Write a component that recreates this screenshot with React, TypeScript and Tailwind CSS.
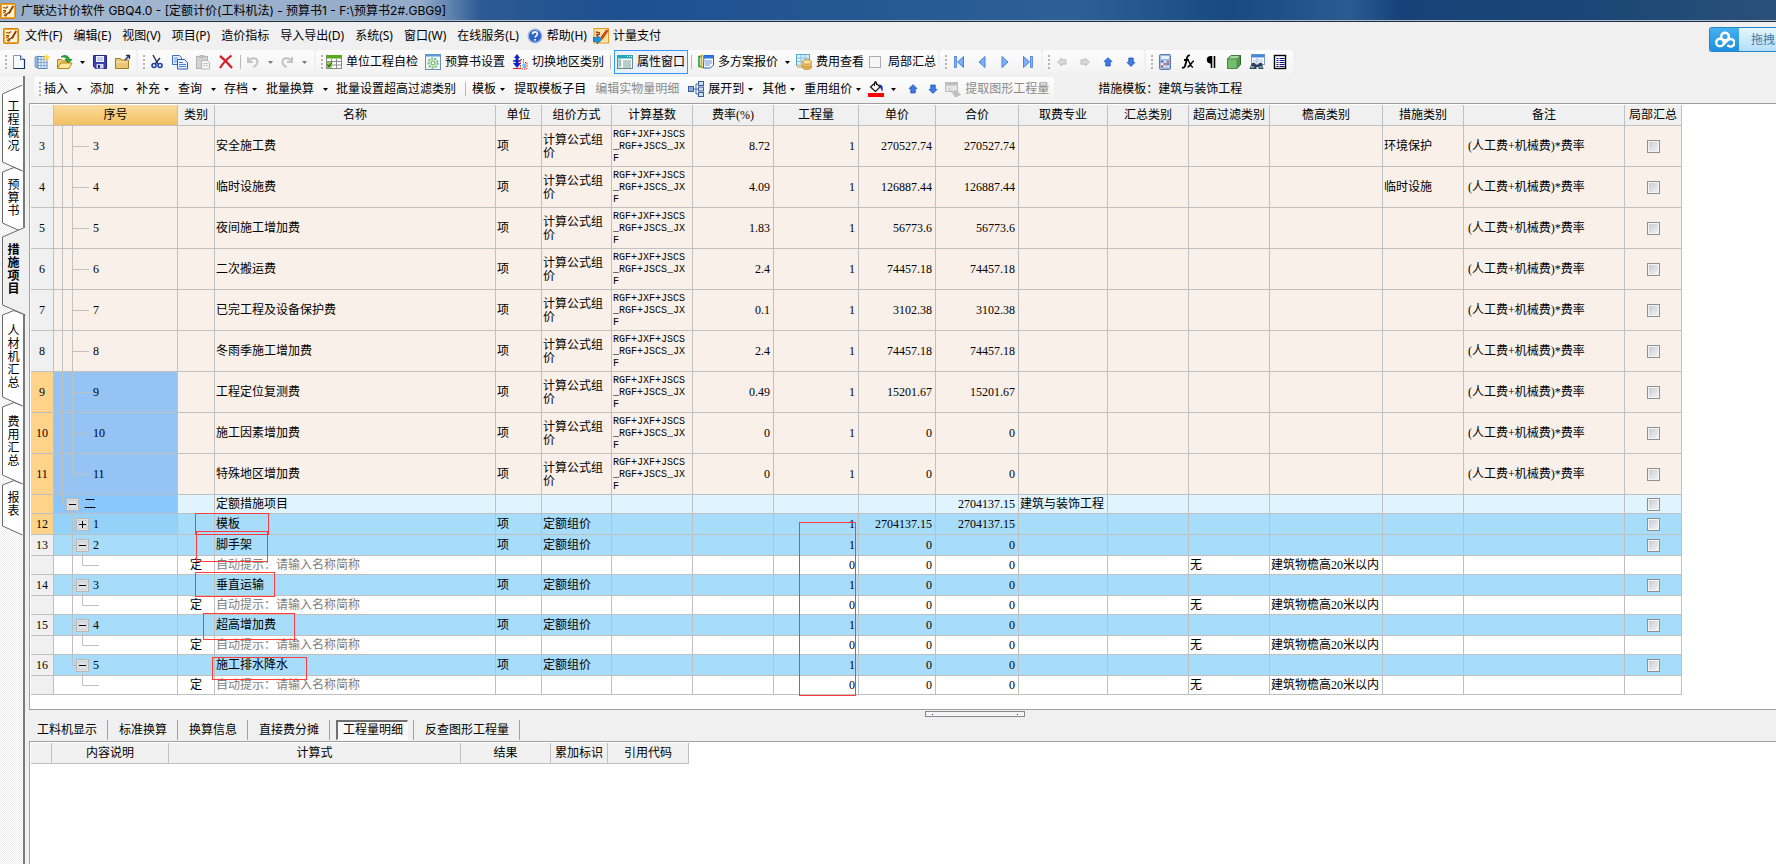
import React from 'react';
import clsx from 'clsx';

const UI_FONT = 'font-["Noto_Sans","Noto_Sans_CJK_SC",sans-serif]';
const TITLE_FONT = 'font-["Inter","Noto_Sans_CJK_SC",sans-serif]';
const GRID_FONT = 'font-["Liberation_Serif","Noto_Sans_CJK_SC",serif]';

/* ---------- icons ---------- */

const Svg = ({ children, size = 16 }: { children: React.ReactNode; size?: number }) => (
  <svg width={size} height={size} viewBox="0 0 16 16" fill="none" className="shrink-0" aria-hidden="true">
    {children}
  </svg>
);

const LogoIcon = () => (
  <Svg>
    <rect x="0.5" y="0.5" width="15" height="15" rx="1" fill="#f5a623" stroke="#d98213" />
    <rect x="2" y="2" width="12" height="12" fill="#fff3d6" />
    <path d="M3 4.500l3 .5 2-1.500M3 7.500h3M3 10l3-2M4 13l2-3" stroke="#a34a00" strokeWidth="1.200" />
    <path d="M5.500 13.500c1-3 3-4 5-4.500" stroke="#7a2e00" strokeWidth="1.200" />
    <path d="M8 10l4.500-7.500 1.500 1L9.500 11z" fill="#8a3600" />
  </Svg>
);

const NewIcon = () => (
  <Svg>
    <path d="M2.500 1.500h7l4 4v9h-11z" fill="#f6faff" stroke="#7d97bd" />
    <path d="M9.500 1.500v4h4" fill="#c8daf0" stroke="#3d5f8f" />
    <path d="M13.500 5v9.500h-11" stroke="#16365f" strokeWidth="1.200" />
  </Svg>
);

const TableNewIcon = () => (
  <Svg>
    <path d="M1 3l3-1v12l-3-1z" fill="#9dbbe0" stroke="#5d86b8" strokeWidth="0.7" />
    <rect x="4" y="2.500" width="9" height="12" fill="#eaf2fc" stroke="#5d86b8" />
    <path d="M4 5.500h9M4 8.500h9M4 11.500h9M7 3v11M10 3v11" stroke="#7fa5d4" />
    <path d="M12.500 0l1 2 2-.5-1 2 1.500 1.500-2 .3-.5 2-1.500-1.600-2 .6.8-2L9 2.500l2.200-.2z" fill="#ffd84a" />
  </Svg>
);

const OpenIcon = () => (
  <Svg>
    <path d="M.5 14V5.500h4l1 1.500h6v2" fill="#f5cf6a" stroke="#b98518" />
    <path d="M.5 14.500L3.500 9H15l-3 5.500z" fill="#ffe9a0" stroke="#b98518" />
    <path d="M4 3c4-3 8-1 8.500 2.500H15L11.500 9 8 5.500h2C9.500 3.500 7 2.500 4 3z" fill="#2fae2f" stroke="#157015" strokeWidth="0.7" />
  </Svg>
);

const SaveIcon = () => (
  <Svg>
    <path d="M1.500 1.500h13v13h-11l-2-2z" fill="#3b41b5" stroke="#23287e" />
    <rect x="4" y="2" width="8" height="6" fill="#f3f5ff" />
    <path d="M5 4h6M5 6h6" stroke="#9aa0dd" />
    <rect x="4.500" y="10" width="7" height="4.500" fill="#d6d9f2" />
    <rect x="6" y="11" width="2" height="3" fill="#23287e" />
  </Svg>
);

const FolderIcon = () => (
  <Svg>
    <path d="M.5 4.500h5l1 1.500h7v8.500H.5z" fill="#e9c777" stroke="#a37c2a" />
    <path d="M1 8h12" stroke="#fbe7b4" />
    <path d="M10 6l4-4M11 1.500h3.500V5" stroke="#1e2f6b" strokeWidth="1.300" />
  </Svg>
);

const CutIcon = () => (
  <Svg>
    <path d="M4 1l5 9M11 4L6 10" stroke="#222d5a" strokeWidth="1.400" />
    <circle cx="5" cy="11.500" r="2" stroke="#1a3fb0" strokeWidth="1.600" />
    <circle cx="11" cy="11.500" r="2" stroke="#1a3fb0" strokeWidth="1.600" />
  </Svg>
);

const CopyIcon = () => (
  <Svg>
    <path d="M.5 1.500h7l2 2v7H.5z" fill="#e7f0ff" stroke="#3c6fc9" />
    <path d="M2 4h4M2 6h4M2 8h4" stroke="#6f98dd" />
    <path d="M5.500 5.500h7l3 3v6.500h-10z" fill="#e7f0ff" stroke="#2a5cba" />
    <path d="M7 8.500h4M7 10.500h7M7 12.500h7" stroke="#4d80d4" />
  </Svg>
);

const PasteIcon = () => (
  <Svg>
    <rect x="1.500" y="2.500" width="11" height="12" fill="#d3d3d3" stroke="#b2b2b2" />
    <rect x="4.500" y="1" width="5" height="3" fill="#bcbcbc" />
    <path d="M6.500 6.500h6l2 2v6.500h-8z" fill="#f4f4f4" stroke="#b8b8b8" />
    <path d="M8 9.500h5M8 11.500h5" stroke="#c8c8c8" />
  </Svg>
);

const DeleteIcon = () => (
  <Svg>
    <path d="M2 2c4 3 8 7 12 12M13.500 1.500C9 5 5 9 2 14" stroke="#d3202b" strokeWidth="2.200" />
  </Svg>
);

const UndoIcon = ({ flip = false }: { flip?: boolean }) => (
  <svg width="14" height="14" viewBox="0 0 14 14" fill="none" className={clsx('shrink-0', flip && '-scale-x-100')} aria-hidden="true">
    <path d="M2 2v5h5M2.500 6.500C5 2 11 2.500 11.500 6.500c.2 3-2 4.500-4 5.500" stroke="#c3c3c3" strokeWidth="2" />
  </svg>
);

const CheckGridIcon = () => (
  <Svg>
    <rect x="0.500" y="1.500" width="15" height="13" fill="#fff" stroke="#8a8a8a" />
    <rect x="0.500" y="1" width="15" height="3.500" fill="#5aa81c" />
    <path d="M0 7.500h16M0 11h16M5.500 5v10M10.500 5v10" stroke="#8a8a8a" />
    <rect x="1" y="8" width="5" height="6" fill="#8ed04b" />
    <path d="M1.500 10.500l1.500 2 3-4" stroke="#1d5a00" strokeWidth="1.200" />
  </Svg>
);

const GearIcon = () => (
  <Svg>
    <rect x="0.500" y="0.500" width="15" height="15" fill="#eef6fb" stroke="#6c8fb5" />
    <path d="M0 1.500h16" stroke="#5a9bd8" strokeWidth="2" />
    <circle cx="8" cy="9" r="4.600" fill="#d8f0d4" stroke="#6fb573" strokeWidth="1.800" strokeDasharray="2 1.200" />
    <circle cx="8" cy="9" r="2" fill="#fff" stroke="#56a25b" />
  </Svg>
);

const SwitchIcon = () => (
  <Svg>
    <path d="M5 0l3 4H6.500v5h2.500l-4 5-4-5h2.500V4H2z" fill="#1022c8" />
    <path d="M1 7h7" stroke="#1022c8" strokeWidth="1.500" />
    <path d="M8.500 5.500h3v3h3.500v6.500H8.500z" fill="#fff" stroke="#e02020" strokeDasharray="1.500 1" />
    <path d="M10.500 9.500h3.500V14h-3.500z" fill="#69c6de" />
    <path d="M1 14.500h7" stroke="#e02020" />
  </Svg>
);

const PropertyIcon = () => (
  <Svg>
    <rect x="0.500" y="1.500" width="15" height="13" fill="#fff" stroke="#6b8796" />
    <rect x="0.500" y="1" width="15" height="3.500" fill="#2aa5b8" />
    <path d="M10 2.500h1M12 2.500h1M14 2.500h1" stroke="#fff" />
    <rect x="1" y="5" width="3.500" height="9" fill="#c4dede" />
    <path d="M2 7h2M2 9h2M2 11h2M6 7h8M6 9h8M6 11h8M6 13h8" stroke="#6f9e8e" />
  </Svg>
);

const PlansIcon = () => (
  <Svg>
    <path d="M3 2.500H1v10h2" stroke="#1f9c3c" strokeWidth="1.600" />
    <path d="M5 1.500H3.500v12H5" stroke="#e0a400" strokeWidth="1.600" />
    <path d="M6 1.500h9.500v9.500l-3 3H5.500z" fill="#fff" stroke="#1c5fd0" />
    <rect x="5.500" y="1.500" width="10" height="3" fill="#2f74e0" />
    <path d="M7 7h7M7 9h7M7 11h5" stroke="#5b90e6" />
  </Svg>
);

const CoinsIcon = () => (
  <Svg>
    <rect x="0.500" y="0.500" width="13" height="11" fill="#dff1fb" stroke="#5aa7d4" />
    <path d="M1 4h12M1 7.500h12M5 1v10M9 1v10" stroke="#7cc0e4" />
    <ellipse cx="11" cy="13" rx="4.500" ry="2.300" fill="#e9b64e" stroke="#c2933c" />
    <ellipse cx="11" cy="10.500" rx="4.500" ry="2.300" fill="#f4cb6c" stroke="#c2933c" />
    <ellipse cx="11" cy="8" rx="4.500" ry="2.300" fill="#fbe09a" stroke="#c2933c" />
    <path d="M1 10.500h5v3.500H1z" fill="#d9c88a" />
  </Svg>
);

const HelpIcon = () => (
  <Svg>
    <circle cx="8" cy="8" r="6.800" fill="#2f63c8" stroke="#9db8e4" strokeWidth="1.400" />
    <path d="M5.600 6.200c.2-3 4.800-3 4.800-.2 0 1.800-2.300 1.800-2.300 3.600M8.100 11v1.700" stroke="#fff" strokeWidth="1.700" />
  </Svg>
);

const PayIcon = () => (
  <Svg>
    <rect x="1" y="0.500" width="14.500" height="14.500" fill="#ffe2a4" stroke="#e39a26" />
    <path d="M3 4l4 1M3 7l4-1M8 10l6-8" stroke="#a83a1a" strokeWidth="1.600" />
    <path d="M9 11l6-9" stroke="#d3541f" strokeWidth="2" />
    <path d="M0 9.500h4V7l5 4.500L4 16v-2.500H0z" fill="#1f8fd6" stroke="#0d5d97" strokeWidth="0.600" />
  </Svg>
);

type Dir = 'left' | 'right' | 'up' | 'down';
const ROTATE: Record<Dir, number> = { up: 0, right: 90, down: 180, left: 270 };

const BlockArrow = ({ dir, disabled = false }: { dir: Dir; disabled?: boolean }) => (
  <Svg size={14}>
    <path
      d="M8 3l4.500 4.500H10.500v5h-5v-5H3.500z"
      transform={`rotate(${ROTATE[dir]} 8 8)`}
      fill={disabled ? '#d9d9d9' : '#3f7be8'}
      stroke={disabled ? '#b9b9b9' : '#2456b8'}
    />
  </Svg>
);

const NavIcon = ({ dir, bar = false }: { dir: 'left' | 'right'; bar?: boolean }) => (
  <Svg>
    <g transform={dir === 'right' ? 'rotate(180 8 8)' : undefined}>
      <path d={bar ? 'M12.500 2.500v11L6.500 8z' : 'M11 2.500v11L5 8z'} fill="#7fb0f5" stroke="#4a80dc" />
      {bar && <rect x="3.500" y="2.500" width="2" height="11" fill="#7fb0f5" stroke="#4a80dc" strokeWidth="0.800" />}
    </g>
  </Svg>
);

const CalcIcon = () => (
  <Svg>
    <rect x="2.500" y="0.500" width="11" height="15" rx="1" fill="#9db6de" stroke="#5d79ad" />
    <rect x="4" y="2" width="8" height="3" fill="#e6f0fb" />
    <path d="M4 7.500h8M4 10h8M4 12.500h8" stroke="#fff" strokeWidth="1.600" strokeDasharray="2 1" />
    <path d="M10 7.500h2M7 10h2M4 12.500h2" stroke="#e04040" strokeWidth="1.600" />
    <path d="M4 7.500h2M10 10h2" stroke="#3355c0" strokeWidth="1.600" />
  </Svg>
);

const FxIcon = () => (
  <Svg>
    <path d="M10 1.500c-3-1-3 3-4 7s-1.500 6-4 5M4 6h5" stroke="#000" strokeWidth="1.800" />
    <path d="M8 7c2 0 2 6 5 6M14 7c-2 0-4 6-6.500 6" stroke="#000" strokeWidth="1.400" />
  </Svg>
);

const PilcrowIcon = () => (
  <Svg>
    <path d="M13.500 2H7a3.800 3.800 0 0 0 0 7.500h1V2z" fill="#000" />
    <path d="M8.500 2v12M11.500 2v12" stroke="#000" strokeWidth="1.600" />
  </Svg>
);

const CubeIcon = () => (
  <Svg>
    <path d="M1.500 5l3.500-3.500h9.500v9L11 14.500H1.500z" fill="#4d9a4a" stroke="#2a6428" />
    <path d="M1.500 5L5 1.500h9.500L11 5z" fill="#a6d8a2" stroke="#2a6428" strokeWidth="0.600" />
    <path d="M1.500 5H11v9.500H1.500z" fill="#74bd6f" stroke="#3f8a3c" strokeWidth="0.600" />
  </Svg>
);

const FindIcon = () => (
  <Svg>
    <rect x="2.500" y="0.500" width="13" height="10" fill="#fff" stroke="#7a9cd0" />
    <rect x="2.500" y="0.500" width="13" height="3" fill="#4a86dc" />
    <path d="M4 6h10M4 8h10M8 4v6" stroke="#a9bfdf" />
    <path d="M3 9h3l1 2h2l1-2h3l1.500 6H9.500v-2h-2v2H.5z" fill="#30404e" />
    <path d="M2 13h3M10.500 13h3" stroke="#8ec1e8" strokeWidth="1.400" />
  </Svg>
);

const ListIcon = () => (
  <Svg>
    <rect x="2.500" y="1.500" width="11" height="13" fill="#fff" stroke="#000" strokeWidth="1.400" />
    <path d="M4.500 4.500h2M4.500 6.500h2M4.500 8.500h2M4.500 10.500h2M4.500 12.500h2M7.500 4.500h5M7.500 6.500h5M7.500 8.500h5M7.500 10.500h5M7.500 12.500h5" stroke="#0a0a8c" />
  </Svg>
);

const ExpandIcon = () => (
  <Svg>
    <path d="M5 8h5M8 3v10M8 3h3M8 13h3" stroke="#4b6ea8" />
    <rect x="0.500" y="5.500" width="5" height="5" fill="#8aa9dc" stroke="#3a5c98" />
    <rect x="10.500" y="0.500" width="5" height="4" fill="#cfdcf2" stroke="#3a5c98" />
    <rect x="10.500" y="6" width="5" height="4" fill="#cfdcf2" stroke="#3a5c98" />
    <rect x="10.500" y="11.500" width="5" height="4" fill="#cfdcf2" stroke="#3a5c98" />
  </Svg>
);

const BucketIcon = () => (
  <Svg>
    <path d="M2.500 6l5-4.500L12 6l-4.500 4.500z" fill="#fff" stroke="#111" strokeWidth="1.200" />
    <path d="M6.500 5V1.500c0-1.500 2-1.500 2 0V4" stroke="#111" />
    <path d="M11 3.500c4 0 4 3 3.500 7-1.500-1-1.500-4-3.500-5z" fill="#1c2fa8" />
    <rect x="0" y="12" width="16" height="4" fill="#f00" />
  </Svg>
);

const ExtractIcon = () => (
  <Svg>
    <rect x="0.500" y="1.500" width="12" height="9" fill="#e4e4e4" stroke="#bdbdbd" />
    <rect x="0.500" y="1.500" width="12" height="3" fill="#bdbdbd" />
    <path d="M4 7c1 4 4 5 6 5V9.500l5.500 4-5.500 3" fill="#c2c2c2" stroke="#adadad" strokeWidth="0.600" />
  </Svg>
);

const CloudIcon = () => (
  <svg width="20" height="18" viewBox="0 0 20 18" fill="none" stroke="#fff" strokeWidth="2.400" aria-hidden="true">
    <circle cx="10" cy="5.500" r="3.800" />
    <circle cx="5" cy="11.500" r="3.800" />
    <path d="M8 14l5-5a3.800 3.800 0 1 1-.5 5" />
  </svg>
);

/* ---------- toolbar parts ---------- */

const Caret = ({ disabled = false }: { disabled?: boolean }) => (
  <svg width="5" height="3" viewBox="0 0 5 3" className="shrink-0" aria-hidden="true">
    <path d="M0 0h5L2.500 3z" fill={disabled ? '#777' : '#000'} />
  </svg>
);

const Grip = () => (
  <span className="flex w-[7px] shrink-0 flex-col items-center gap-0.5 pl-1">
    {[0, 1, 2, 3].map((n) => (
      <i key={n} className="size-0.5 bg-[#b4b4b4]" />
    ))}
  </span>
);

const Sep = () => (
  <span className="flex w-[7px] shrink-0 justify-center">
    <i className="h-3.5 w-px bg-[#b8b8b8]" />
  </span>
);

const Group = ({ children }: { children: React.ReactNode }) => (
  <div className="flex h-6 shrink-0 items-center rounded-[3px] bg-linear-to-b from-[#fdfdfd] to-[#f2f2f2] pr-0.5">
    <Grip />
    {children}
  </div>
);

const IconBtn = ({ label, className = 'w-[23px]', children }: { label: string; className?: string; children: React.ReactNode }) => (
  <button type="button" aria-label={label} className={clsx('flex h-6 shrink-0 items-center justify-center', className)}>
    {children}
  </button>
);

type TextBtnProps = { label: string; icon?: React.ReactNode; active?: boolean; disabled?: boolean; menu?: boolean; className?: string };

const TextBtn = ({ label, icon, active, disabled, menu, className }: TextBtnProps) => (
  <button
    type="button"
    disabled={disabled}
    className={clsx(
      'flex h-6 shrink-0 items-center gap-1 whitespace-nowrap',
      active && 'border border-[#3399ff] bg-[#eaf1f8] px-0.5',
      !active && 'pl-[3px]',
      !active && (menu ? 'pr-1.5' : 'pr-[3px]'),
      disabled && 'text-[#8a8a8a]',
      className,
    )}
  >
    {icon}
    {label}
    {menu && <Caret />}
  </button>
);

const Split = ({ label }: { label: string }) => (
  <>
    <TextBtn label={label} />
    <IconBtn label={`${label}选项`} className="w-4">
      <Caret />
    </IconBtn>
  </>
);

/* ---------- window chrome ---------- */

const TitleBar = () => (
  <header className="flex h-[22px] items-center gap-[5px] border-b border-[#1d2c40] bg-[linear-gradient(90deg,#8fa9c8_0,#a3b7d0_60px,#93abc9_420px,#2c5a93_480px,#1d5090_620px,#2c6095_1080px,#184a80_1230px,#2a5c90_1350px,#164278_1400px,#1a4776_1600px,#2a5078_100%)] shadow-[inset_0_-1px_0_#aebdcf]">
    <LogoIcon />
    <h1 className={clsx('text-[12px] leading-4', TITLE_FONT)}>广联达计价软件 GBQ4.0 - [定额计价(工料机法) - 预算书1 - F:\预算书2#.GBG9]</h1>
  </header>
);

const MENUS = ['文件(F)', '编辑(E)', '视图(V)', '项目(P)', '造价指标', '导入导出(D)', '系统(S)', '窗口(W)', '在线服务(L)'];

const MenuBar = () => (
  <nav className="flex h-7 items-center pl-[3px]">
    <LogoIcon />
    <div className="flex items-center gap-[11px] pl-1.5">
      {MENUS.map((m) => (
        <button key={m} type="button">{m}</button>
      ))}
    </div>
    <div className="flex items-center gap-1.5 pl-2">
      <button type="button" className="flex items-center gap-1"><HelpIcon />帮助(H)</button>
      <button type="button" className="flex items-center gap-1"><PayIcon />计量支付</button>
    </div>
  </nav>
);

const MainToolbar = () => (
  <div className="flex h-[26px] items-start gap-0.5">
    <Group>
      <IconBtn label="新建"><NewIcon /></IconBtn>
      <IconBtn label="新建表"><TableNewIcon /></IconBtn>
      <IconBtn label="打开"><OpenIcon /></IconBtn>
      <IconBtn label="最近文件" className="w-3"><Caret /></IconBtn>
      <IconBtn label="保存"><SaveIcon /></IconBtn>
      <IconBtn label="导出"><FolderIcon /></IconBtn>
    </Group>
    <Group>
      <IconBtn label="剪切"><CutIcon /></IconBtn>
      <IconBtn label="复制"><CopyIcon /></IconBtn>
      <IconBtn label="粘贴"><PasteIcon /></IconBtn>
      <IconBtn label="删除"><DeleteIcon /></IconBtn>
      <Sep />
      <IconBtn label="撤销" className="w-[18px]"><UndoIcon /></IconBtn>
      <IconBtn label="撤销列表" className="w-4"><Caret disabled /></IconBtn>
      <IconBtn label="重做" className="w-[18px]"><UndoIcon flip /></IconBtn>
      <IconBtn label="重做列表" className="w-4"><Caret disabled /></IconBtn>
    </Group>
    <Group>
      <div className="flex items-center gap-px">
        <TextBtn icon={<CheckGridIcon />} label="单位工程自检" />
        <TextBtn icon={<GearIcon />} label="预算书设置" />
        <TextBtn icon={<SwitchIcon />} label="切换地区类别" />
      </div>
      <Sep />
      <TextBtn icon={<PropertyIcon />} label="属性窗口" active />
      <Sep />
      <TextBtn icon={<PlansIcon />} label="多方案报价" />
      <IconBtn label="多方案报价选项" className="w-3"><Caret /></IconBtn>
      <TextBtn icon={<CoinsIcon />} label="费用查看" />
      <label className="flex items-center gap-[7px] pl-0.5">
        <input type="checkbox" className="size-3 appearance-none border border-[#adadad] bg-[#f6f6f6]" />
        局部汇总
      </label>
    </Group>
    <Group>
      <IconBtn label="首条"><NavIcon dir="left" bar /></IconBtn>
      <IconBtn label="上一条"><NavIcon dir="left" /></IconBtn>
      <IconBtn label="下一条"><NavIcon dir="right" /></IconBtn>
      <IconBtn label="末条"><NavIcon dir="right" bar /></IconBtn>
    </Group>
    <Group>
      <IconBtn label="左移"><BlockArrow dir="left" disabled /></IconBtn>
      <IconBtn label="右移"><BlockArrow dir="right" disabled /></IconBtn>
      <IconBtn label="上移"><BlockArrow dir="up" /></IconBtn>
      <IconBtn label="下移"><BlockArrow dir="down" /></IconBtn>
    </Group>
    <Group>
      <IconBtn label="计算器"><CalcIcon /></IconBtn>
      <IconBtn label="函数"><FxIcon /></IconBtn>
      <IconBtn label="段落"><PilcrowIcon /></IconBtn>
      <IconBtn label="图元"><CubeIcon /></IconBtn>
      <IconBtn label="查找"><FindIcon /></IconBtn>
      <IconBtn label="列表"><ListIcon /></IconBtn>
    </Group>
  </div>
);

const EditToolbar = () => (
  <div className="ml-[5px] flex items-center">
    <Group>
      <Split label="插入" />
      <Split label="添加" />
      <TextBtn label="补充" menu />
      <Split label="查询" />
      <TextBtn label="存档" menu />
      <Split label="批量换算" />
      <TextBtn label="批量设置超高过滤类别" className="mr-[3px]" />
      <Sep />
      <TextBtn label="模板" menu />
      <TextBtn label="提取模板子目" className="mr-[3px]" />
      <TextBtn label="编辑实物量明细" disabled className="mr-[3px]" />
      <TextBtn icon={<ExpandIcon />} label="展开到" menu />
      <TextBtn label="其他" menu />
      <TextBtn label="重用组价" menu />
      <IconBtn label="填充颜色" className="w-[18px]"><BucketIcon /></IconBtn>
      <IconBtn label="颜色选项" className="w-4"><Caret /></IconBtn>
      <IconBtn label="上移行"><BlockArrow dir="up" /></IconBtn>
      <IconBtn label="下移行" className="w-[18px]"><BlockArrow dir="down" /></IconBtn>
      <TextBtn icon={<ExtractIcon />} label="提取图形工程量" disabled />
    </Group>
    <p className="ml-11 whitespace-nowrap">措施模板：建筑与装饰工程</p>
  </div>
);

/* ---------- side tabs ---------- */

const SIDE_TABS = [
  { label: '工程概况', h: 82, end: 86, first: true },
  { label: '预算书', h: 61, end: 65 },
  { label: '措施项目', h: 82, end: 86, active: true },
  { label: '人材机汇总', h: 92, end: 96 },
  { label: '费用汇总', h: 78, end: 82 },
  { label: '报表', h: 48, end: 55 },
];

const SideTabs = () => (
  <aside className="w-[25px] shrink-0 border-r-2 border-[#7a7a7a] bg-[repeating-conic-gradient(#ffffff_0_25%,#eeeeee_0_50%)] bg-size-[2px_2px] pt-[9px]">
    {SIDE_TABS.map(({ label, h, end, first, active }) => {
      const top = first ? 'M22.500 0L2.500 9' : 'M22.500 4L14 0.500L2.500 5';
      return (
        <button
          key={label}
          type="button"
          style={{ height: h }}
          className={clsx('relative flex w-[23px] items-center justify-center', active && 'z-10')}
        >
          <svg width="26" height={end + 2} className="absolute top-0 left-0" fill="none" aria-hidden="true">
            <path
              d={active ? `M25.500 -1L2.500 9V${end - 9}L25.500 ${end + 1}` : `${top}V${end - 9}L22.500 ${end}`}
              fill={active ? '#f0f0f0' : '#fff'}
              stroke="#6a6a6a"
            />
          </svg>
          <span className={clsx('relative ml-1 w-3 text-[12px] leading-[13px] break-all', active && 'font-bold')}>{label}</span>
        </button>
      );
    })}
  </aside>
);

/* ---------- main grid ---------- */

const COLS: [string, string][] = [
  ['', 'w-[23px]'],
  ['序号', 'w-[124px]'],
  ['类别', 'w-[37px]'],
  ['名称', 'w-[281px]'],
  ['单位', 'w-[46px]'],
  ['组价方式', 'w-[70px]'],
  ['计算基数', 'w-[81px]'],
  ['费率(%)', 'w-[81px]'],
  ['工程量', 'w-[85px]'],
  ['单价', 'w-[77px]'],
  ['合价', 'w-[83px]'],
  ['取费专业', 'w-[89px]'],
  ['汇总类别', 'w-[81px]'],
  ['超高过滤类别', 'w-[81px]'],
  ['檐高类别', 'w-[113px]'],
  ['措施类别', 'w-[81px]'],
  ['备注', 'w-[161px]'],
  ['局部汇总', 'w-[57px]'],
];

type Kind = 'fee' | 'group' | 'item' | 'sub';

interface Row {
  kind: Kind;
  no?: string;
  seq?: string;
  name: string;
  rate?: string;
  qty?: string;
  price?: string;
  total?: string;
  measure?: string;
  selected?: boolean;
  closed?: boolean;
  last?: boolean;
}

const fee = (no: string, name: string, rate: string, price: string, extra: Partial<Row> = {}): Row => ({
  kind: 'fee', no, seq: no, name, rate, qty: '1', price, total: price, ...extra,
});
const item = (no: string, seq: string, name: string, extra: Partial<Row> = {}): Row => ({
  kind: 'item', no, seq, name, qty: '1', price: '0', total: '0', ...extra,
});
const sub = (last = false): Row => ({
  kind: 'sub', name: '自动提示：请输入名称简称', qty: '0', price: '0', total: '0', last,
});

const ROWS: Row[] = [
  fee('3', '安全施工费', '8.72', '270527.74', { measure: '环境保护' }),
  fee('4', '临时设施费', '4.09', '126887.44', { measure: '临时设施' }),
  fee('5', '夜间施工增加费', '1.83', '56773.6'),
  fee('6', '二次搬运费', '2.4', '74457.18'),
  fee('7', '已完工程及设备保护费', '0.1', '3102.38'),
  fee('8', '冬雨季施工增加费', '2.4', '74457.18'),
  fee('9', '工程定位复测费', '0.49', '15201.67', { selected: true }),
  fee('10', '施工因素增加费', '0', '0', { selected: true }),
  fee('11', '特殊地区增加费', '0', '0', { selected: true, last: true }),
  { kind: 'group', seq: '二', name: '定额措施项目', total: '2704137.15', selected: true },
  item('12', '1', '模板', { price: '2704137.15', total: '2704137.15', selected: true, closed: true }),
  item('13', '2', '脚手架'),
  sub(),
  item('14', '3', '垂直运输'),
  sub(),
  item('15', '4', '超高增加费'),
  sub(),
  item('16', '5', '施工排水降水', { last: true }),
  sub(true),
];

const ROW_STYLE: Record<Kind, string> = {
  fee: 'h-[41px] bg-[#faf0ea]',
  group: 'h-[19px] bg-[#e0f4ff]',
  item: 'h-[21px] bg-[#a8dcfb]',
  sub: 'h-[19px] bg-white',
};

const SEQ_SELECTED: Record<Kind, string> = {
  fee: 'bg-[#95c4f4]',
  group: 'bg-[#8ac6ff]',
  item: 'bg-[#94d2f9]',
  sub: '',
};

const ExpandBox = ({ x, y, closed }: { x: number; y: number; closed?: boolean }) => (
  <g transform={`translate(${x} ${y})`}>
    <rect x="0.500" y="0.500" width="12" height="12" fill="#fff" stroke="#b8b8b8" />
    <rect x="2" y="2" width="9" height="9" fill="#dfe2e8" />
    <path d={closed ? 'M3 6.500h7M6.500 3v7' : 'M3 6.500h7'} stroke="#000" />
  </g>
);

// connector lines of the outline column, one drawing per row
const Tree = ({ row }: { row: Row }) => {
  if (row.kind === 'fee') {
    return (
      <svg width="36" height="41" fill="none" stroke="#c0c0c0" className="shrink-0" aria-hidden="true">
        <path d={`M8.500 0v41M18.500 0V${row.last ? 21 : 41}M18.500 20.500H35`} />
      </svg>
    );
  }
  if (row.kind === 'group') {
    return (
      <svg width="27" height="19" fill="none" stroke="#c0c0c0" className="shrink-0" aria-hidden="true">
        <path d="M8.500 0v9.500H12M18.500 15v4" />
        <ExpandBox x={12} y={3} />
      </svg>
    );
  }
  if (row.kind === 'item') {
    return (
      <svg width="36" height="21" fill="none" stroke="#c0c0c0" className="shrink-0" aria-hidden="true">
        <path d={`M18.500 0V${row.last ? 11 : 21}M18.500 10.500H22${row.closed ? '' : 'M28.500 17v4'}`} />
        <ExpandBox x={22} y={4} closed={row.closed} />
      </svg>
    );
  }
  return (
    <svg width="46" height="19" fill="none" stroke="#c0c0c0" className="shrink-0" aria-hidden="true">
      <path d={`M28.500 0v9.500H45${row.last ? '' : 'M18.500 0v19'}`} />
    </svg>
  );
};

const CELL = 'border-r border-b border-[#c0c0c0]';
const TD = 'border-r border-b border-[#c0c0c0] pt-px pr-px pb-0 pl-px';
const NUM = 'border-r border-b border-[#c0c0c0] pt-px pr-[3px] pb-0 pl-0 text-right';
const TH = 'h-[21px] border-r border-b border-[#c0c0c0] bg-[#f0f0f0] p-0 font-normal whitespace-nowrap';

const GridRow = ({ row }: { row: Row }) => {
  const isFee = row.kind === 'fee';
  const isItem = row.kind === 'item';
  const isSub = row.kind === 'sub';
  return (
    <tr className={ROW_STYLE[row.kind]}>
      <td className={clsx(TD, 'text-center', row.selected ? 'bg-[#ffd38a]' : 'bg-[#f0f0f0]')}>{row.no}</td>
      <td className={clsx(CELL, 'p-0', row.selected && SEQ_SELECTED[row.kind])}>
        <div className="-mb-px flex items-center gap-[3px]">
          <Tree row={row} />
          {row.seq}
        </div>
      </td>
      <td className={clsx(TD, 'text-center')}>{isSub && '定'}</td>
      <td className={clsx(TD, isSub && 'text-[#808080]')}>{row.name}</td>
      <td className={TD}>{(isFee || isItem) && '项'}</td>
      <td className={TD}>{isFee ? '计算公式组价' : isItem && '定额组价'}</td>
      <td className={clsx(TD, 'font-["Liberation_Mono",monospace] text-[10px] leading-3 break-all')}>
        {isFee && <div className="pr-1">RGF+JXF+JSCS_RGF+JSCS_JXF</div>}
      </td>
      <td className={NUM}>{row.rate}</td>
      <td className={NUM}>{row.qty}</td>
      <td className={NUM}>{row.price}</td>
      <td className={NUM}>{row.total}</td>
      <td className={clsx(TD, 'whitespace-nowrap')}>{row.kind === 'group' && '建筑与装饰工程'}</td>
      <td className={TD} />
      <td className={TD}>{isSub && '无'}</td>
      <td className={clsx(TD, 'whitespace-nowrap')}>{isSub && '建筑物檐高20米以内'}</td>
      <td className={TD}>{row.measure}</td>
      <td className={clsx(CELL, 'px-1 pt-px pb-0')}>{isFee && '(人工费+机械费)*费率'}</td>
      <td className={TD}>
        {!isSub && (
          <input
            type="checkbox"
            aria-label={`局部汇总 ${row.name}`}
            className="mx-auto block size-[13px] appearance-none border border-[#8e8f8f] bg-linear-to-br from-[#c3c8d1] to-[#f6f6f6] shadow-[inset_0_0_0_1px_#f4f4f4]"
          />
        )}
      </td>
    </tr>
  );
};

// hand-drawn highlight frames lying over the grid
const MARKS = [
  'left-[165px] top-[409px] w-[74px] h-[22px]',
  'left-[166px] top-[427px] w-[72px] h-[31px]',
  'left-[165px] top-[468px] w-[80px] h-[25px]',
  'left-[173px] top-[509px] w-[92px] h-[27px]',
  'left-[182px] top-[553px] w-[95px] h-[23px]',
  'left-[769px] top-[418px] w-[57px] h-[174px]',
];

const MainGrid = () => (
  <section className={clsx('relative overflow-hidden border-t border-b border-l border-[#a0a0a0] bg-white px-px pt-px pb-[14px]', GRID_FONT)}>
    <table className="w-[1651px] table-fixed border-separate border-spacing-0 text-[12px] leading-[13px]">
      <colgroup>
        {COLS.map(([label, w]) => (
          <col key={label} className={w} />
        ))}
      </colgroup>
      <thead>
        <tr>
          {COLS.map(([label]) => (
            <th key={label} className={clsx(TH, label === '序号' && 'bg-linear-to-b from-[#fbdb9c] to-[#f1c062]')}>
              {label}
            </th>
          ))}
        </tr>
      </thead>
      <tbody>
        {ROWS.map((row, i) => (
          <GridRow key={i} row={row} />
        ))}
      </tbody>
    </table>
    {MARKS.map((m) => (
      <div key={m} className={clsx('pointer-events-none absolute border border-[#ff3b3b]', m)} />
    ))}
  </section>
);

/* ---------- bottom panel ---------- */

const BOTTOM_TABS = ['工料机显示', '标准换算', '换算信息', '直接费分摊', '工程量明细', '反查图形工程量'];

const BottomTabs = () => (
  <div className="-ml-0.5 flex h-[23px] items-center gap-px">
    {BOTTOM_TABS.map((t) => (
      <div key={t} className="flex h-5 items-center border-r border-[#a0a0a0] px-[5px]">
        <button
          type="button"
          className={clsx(
            'h-5 whitespace-nowrap',
            t === '工程量明细'
              ? 'border-t-2 border-r border-b border-l-2 border-t-[#707070] border-r-white border-b-white border-l-[#707070] bg-[#f8f8f8] pr-1 pl-[5px]'
              : 'px-[5px]',
          )}
        >
          {t}
        </button>
      </div>
    ))}
  </div>
);

const DETAIL_COLS: [string, string][] = [
  ['', 'w-[21px]'],
  ['内容说明', 'w-[117px]'],
  ['计算式', 'w-[292px]'],
  ['结果', 'w-[90px]'],
  ['累加标识', 'w-[57px]'],
  ['引用代码', 'w-[81px]'],
];

const DetailGrid = () => (
  <section className={clsx('flex-1 border-t border-l border-[#a0a0a0] bg-white p-px', GRID_FONT)}>
    <table className="w-[658px] table-fixed border-separate border-spacing-0 text-[12px] leading-[13px]">
      <thead>
        <tr>
          {DETAIL_COLS.map(([label, w]) => (
            <th key={label} className={clsx(TH, w)}>{label}</th>
          ))}
        </tr>
      </thead>
    </table>
  </section>
);

export default function App() {
  return (
    <div className={clsx('relative flex min-h-screen flex-col overflow-hidden bg-[#f0f0f0] text-[12px] leading-4 text-black', UI_FONT)}>
      <TitleBar />
      <MenuBar />
      <MainToolbar />

      <div className="flex flex-1">
        <SideTabs />
        <main className="ml-1 flex min-w-0 flex-1 flex-col pt-px">
          <EditToolbar />
          <div className="mt-0.5">
            <MainGrid />
          </div>
          <div className="flex h-2 items-center justify-center">
            <div className="ml-36 flex h-1.5 w-[100px] items-center justify-between border border-[#8a8a8a] bg-[#f4f4f4] px-1.5">
              <i className="size-px bg-[#1a1a8c]" />
              <i className="size-px bg-[#1a1a8c]" />
            </div>
          </div>
          <BottomTabs />
          <DetailGrid />
        </main>
      </div>

      <button
        type="button"
        className="absolute top-[27px] right-0 flex h-[25px] w-[67px] overflow-hidden rounded-l-[3px] border border-r-0 border-[#2585c8] bg-linear-to-b from-[#e6f5fe] to-[#b3dffa] text-[#4577a3]"
      >
        <span className="flex h-full w-[29px] shrink-0 items-center justify-center bg-linear-to-b from-[#45b0f0] to-[#1f8fe0]">
          <CloudIcon />
        </span>
        <span className="self-center pl-3 whitespace-nowrap">拖拽</span>
      </button>
    </div>
  );
}
